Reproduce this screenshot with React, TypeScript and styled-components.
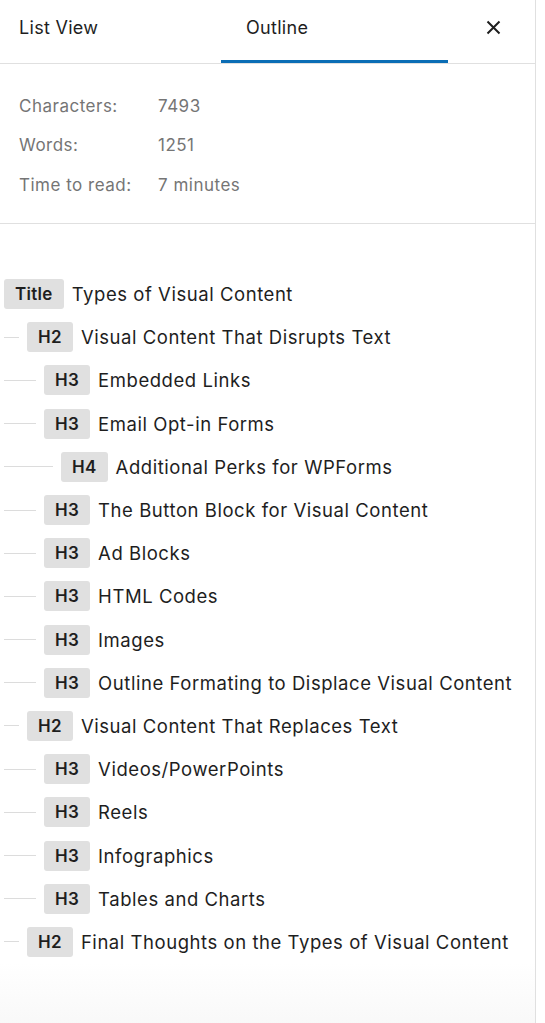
import * as React from "react"
import styled, { createGlobalStyle } from "styled-components"

const GlobalStyle = createGlobalStyle`
  html, body {
    margin: 0;
    padding: 0;
    background: #fff;
  }
  body {
    font-family: Inter, "Noto Sans", "Liberation Sans", sans-serif;
    color: #1e1e1e;
    -webkit-font-smoothing: antialiased;
  }
`

type Heading = { level: number; text: string }

const headings: Heading[] = [
  { level: 1, text: "Types of Visual Content" },
  { level: 2, text: "Visual Content That Disrupts Text" },
  { level: 3, text: "Embedded Links" },
  { level: 3, text: "Email Opt-in Forms" },
  { level: 4, text: "Additional Perks for WPForms" },
  { level: 3, text: "The Button Block for Visual Content" },
  { level: 3, text: "Ad Blocks" },
  { level: 3, text: "HTML Codes" },
  { level: 3, text: "Images" },
  { level: 3, text: "Outline Formating to Displace Visual Content" },
  { level: 2, text: "Visual Content That Replaces Text" },
  { level: 3, text: "Videos/PowerPoints" },
  { level: 3, text: "Reels" },
  { level: 3, text: "Infographics" },
  { level: 3, text: "Tables and Charts" },
  { level: 2, text: "Final Thoughts on the Types of Visual Content" },
]

const stats = [
  { label: "Characters:", value: "7493" },
  { label: "Words:", value: "1251" },
  { label: "Time to read:", value: "7 minutes" },
]

export default function App() {
  return (
    <Page>
      <GlobalStyle />
      <Panel>
        <Header>
          <TabLabel>List View</TabLabel>
          <ActiveTab>Outline</ActiveTab>
          <CloseButton aria-label="Close">
            <svg width="15" height="15" viewBox="0 0 15 15">
              <path d="M1.5 1.5 L13.5 13.5 M13.5 1.5 L1.5 13.5" stroke="#1e1e1e" strokeWidth="2" fill="none" />
            </svg>
          </CloseButton>
        </Header>

        <Stats>
          {stats.map((s) => (
            <StatRow key={s.label}>
              <StatLabel>{s.label}</StatLabel>
              <StatValue>{s.value}</StatValue>
            </StatRow>
          ))}
        </Stats>

        <OutlineList>
          {headings.map((h, i) => (
            <OutlineRow key={i}>
              {h.level > 1 && <Connector $level={h.level} />}
              <Badge>{h.level === 1 ? "Title" : `H${h.level}`}</Badge>
              <HeadingText>{h.text}</HeadingText>
            </OutlineRow>
          ))}
        </OutlineList>
        <BottomFade />
      </Panel>
    </Page>
  )
}

const Page = styled.div`
  width: 545px;
  height: 1023px;
  display: flex;
  overflow: hidden;
`

const Panel = styled.div`
  position: relative;
  width: 535px;
  height: 100%;
  border-right: 1px solid #e0e0e0;
  display: flex;
  flex-direction: column;
`

const Header = styled.div`
  height: 63px;
  border-bottom: 1px solid #e0e0e0;
  display: flex;
  align-items: stretch;
  font-size: 18px;
  letter-spacing: 0.3px;
`

const TabLabel = styled.div`
  width: 221px;
  padding-left: 19px;
  box-sizing: border-box;
  display: flex;
  align-items: center;
  padding-bottom: 8px;
`

const ActiveTab = styled.div`
  width: 227px;
  box-sizing: border-box;
  padding-left: 25px;
  display: flex;
  align-items: center;
  padding-bottom: 5px;
  border-bottom: 3px solid #0a6db5;
`

const CloseButton = styled.div`
  flex: 1;
  display: flex;
  align-items: center;
  padding-left: 38px;
  padding-bottom: 8px;
`

const Stats = styled.div`
  padding: 22px 19px 18px;
  border-bottom: 1px solid #e0e0e0;
  display: flex;
  flex-direction: column;
`

const StatRow = styled.div`
  height: 39.5px;
  display: flex;
  align-items: center;
  font-size: 17px;
  letter-spacing: 0.5px;
  color: #757575;
`

const StatLabel = styled.span`
  width: 139px;
`

const StatValue = styled.span``

const OutlineList = styled.div`
  padding: 49px 0 0 4px;
  display: flex;
  flex-direction: column;
`

const OutlineRow = styled.div`
  height: 43.2px;
  display: flex;
  align-items: center;
`

const Connector = styled.span<{ $level: number }>`
  width: ${(p) => 15 + (p.$level - 2) * 17}px;
  height: 1px;
  background: #dcdcdc;
  margin-right: 8px;
`

const Badge = styled.span`
  height: 30px;
  padding: 0 11px;
  border-radius: 3px;
  background: #e0e0e0;
  font-weight: 600;
  font-size: 17px;
  letter-spacing: 0.3px;
  display: inline-flex;
  align-items: center;
  color: #1e1e1e;
`

const HeadingText = styled.span`
  margin-left: 8px;
  font-size: 18.5px;
  letter-spacing: 0.55px;
  white-space: nowrap;
`

const BottomFade = styled.div`
  position: absolute;
  left: 0;
  right: 0;
  bottom: 0;
  height: 60px;
  background: linear-gradient(to bottom, rgba(247, 247, 247, 0), rgba(247, 247, 247, 0.8));
  pointer-events: none;
`
